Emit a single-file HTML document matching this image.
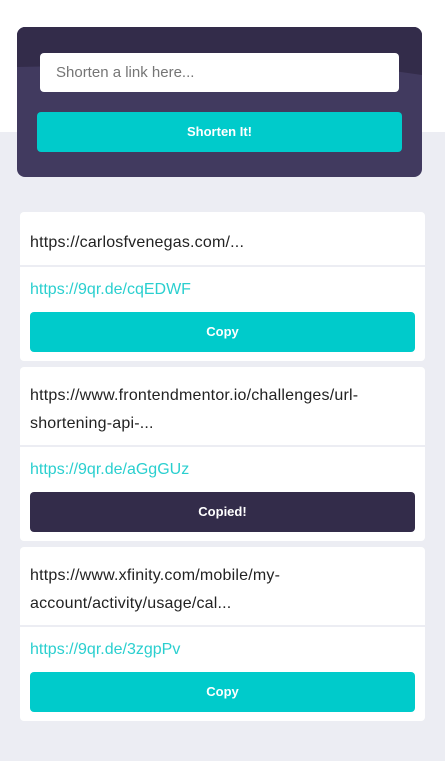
<!DOCTYPE html>
<html><head><style>
*{margin:0;padding:0;box-sizing:border-box}
body{width:445px;height:761px;background:#ecedf3;font-family:"Liberation Sans",sans-serif;position:relative;overflow:hidden}
.top{position:absolute;left:0;top:0;width:445px;height:132px;background:#fff}
.hero{position:absolute;left:17px;top:27px;width:405px;height:150px;border-radius:8px;overflow:hidden;background:#413a5f}
.hero svg{position:absolute;left:0;top:0}
.inp{position:absolute;left:23px;top:26px;width:359px;height:39px;background:#fff;border-radius:4px;color:#757575;font-size:15px;padding:11px 0 0 16px}
.btn{position:absolute;left:20px;top:85px;width:365px;height:40px;background:#00cbcb;border-radius:4px;color:#fff;font-weight:bold;font-size:13px;text-align:center;line-height:40px}
.card{position:absolute;left:20px;width:405px;background:#fff;border-radius:4px}
.long{padding:0 10px;font-size:16px;line-height:28px;color:#222;letter-spacing:0.2px}
.div{height:2px;background:#ecedf3}
.short{padding:0 10px;font-size:16px;color:#2acfcf;height:46px;line-height:46px}
.cb{margin:0 10px;height:40px;border-radius:4px;background:#00cbcb;color:#fff;font-weight:bold;font-size:13px;text-align:center;line-height:40px}
.cb.d{background:#332c4a}
</style></head><body>
<div class="top"></div>
<div class="hero">
<svg width="405" height="150"><path d="M0 0H405V48Q300 32 200 36Q100 38 0 40Z" fill="#332c4a"/></svg>
<div class="inp">Shorten a link here...</div>
<div class="btn">Shorten It!</div>
</div>
<div class="card" style="top:212px;height:149px">
<div class="long" style="padding-top:17px;height:53px">https://carlosfvenegas.com/...</div>
<div class="div"></div>
<div class="short" style="height:45px">https://9qr.de/cqEDWF</div>
<div class="cb">Copy</div>
</div>
<div class="card" style="top:367px;height:174px">
<div class="long" style="padding-top:15px;height:78px">https://www.frontendmentor.io/challenges/url-shortening-api-...</div>
<div class="div"></div>
<div class="short" style="height:45px">https://9qr.de/aGgGUz</div>
<div class="cb d">Copied!</div>
</div>
<div class="card" style="top:547px;height:174px">
<div class="long" style="padding-top:15px;height:78px">https://www.xfinity.com/mobile/my-account/activity/usage/cal...</div>
<div class="div"></div>
<div class="short" style="height:45px">https://9qr.de/3zgpPv</div>
<div class="cb">Copy</div>
</div>
</body></html>
